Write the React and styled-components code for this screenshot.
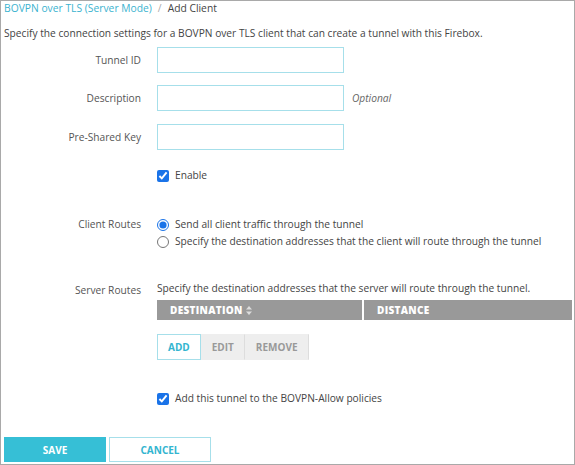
import React, { useState } from "react";
import styled, { createGlobalStyle } from "styled-components";

const GlobalStyle = createGlobalStyle`
  html, body {
    margin: 0;
    padding: 0;
    background: #fff;
  }
  body {
    font-family: "Open Sans", "Liberation Sans", sans-serif;
    font-size: 10.2px;
    color: #444;
  }
`;

const Page = styled.div`
  box-sizing: border-box;
  width: 575px;
  height: 465px;
  border: 1px solid #a9a9a9;
  padding: 0 3px;
  display: flex;
  flex-direction: column;
`;

const Crumbs = styled.div`
  height: 17px;
  line-height: 15px;
  display: flex;
  gap: 6px;
  font-size: 10.3px;
`;

const CrumbLink = styled.span`
  color: #3bb3cf;
`;

const CrumbSep = styled.span`
  color: #aaa;
`;

const Intro = styled.p`
  margin: 7px 0 0;
  line-height: 17px;
  color: #444;
`;

const Row = styled.div`
  display: grid;
  grid-template-columns: 137px 1fr;
  column-gap: 16px;
  align-items: ${(p) => p.$align || "center"};
  margin-top: ${(p) => p.$top || 0}px;
`;

const Label = styled.div`
  text-align: right;
  color: #555;
  line-height: 17px;
  margin-top: ${(p) => p.$top || 0}px;
`;

const Field = styled.div`
  display: flex;
  align-items: center;
  gap: 8px;
`;

const TextInput = styled.input`
  box-sizing: border-box;
  width: 187px;
  height: 26px;
  border: 1px solid #a6dfea;
  outline: none;
  padding: 0 6px;
  font: inherit;
`;

const Hint = styled.span`
  font-style: italic;
  color: #666;
`;

const Check = styled.label`
  display: flex;
  align-items: center;
  gap: 6px;
  line-height: 17px;
  color: #444;

  input {
    margin: 0;
    width: 12px;
    height: 12px;
    accent-color: #1a73e8;
  }
`;

const Options = styled.div`
  display: flex;
  flex-direction: column;
  margin-top: -1px;
`;

const Help = styled.div`
  line-height: 17px;
  color: #444;
  margin-top: 1px;
`;

const Table = styled.div`
  display: grid;
  grid-template-columns: 205px 1fr;
  gap: 2px;
  margin-top: 3px;
  width: 415px;
`;

const HeadCell = styled.div`
  background: #999;
  color: #fff;
  font-weight: 800;
  font-size: 10px;
  letter-spacing: 0.3px;
  height: 20px;
  padding: 0 13px;
  display: flex;
  align-items: center;
  gap: 3px;
`;

const Toolbar = styled.div`
  display: flex;
  margin-top: 14px;
`;

const ToolButton = styled.button`
  box-sizing: border-box;
  height: 26px;
  padding: 0 10px;
  font: inherit;
  font-weight: 700;
  font-size: 10px;
  border: 1px solid ${(p) => (p.$active ? "#a6dfea" : "#eee")};
  border-right: ${(p) => (p.$active ? "1px solid #a6dfea" : "1px solid #ddd")};
  background: ${(p) => (p.$active ? "#fff" : "#eee")};
  color: ${(p) => (p.$active ? "#33b5d0" : "#999")};
`;

const Footer = styled.div`
  display: flex;
  gap: 3px;
  margin-top: auto;
  margin-bottom: 2px;
`;

const MainButton = styled.button`
  box-sizing: border-box;
  width: 102px;
  height: 25px;
  font: inherit;
  font-weight: 700;
  font-size: 10px;
  border: 1px solid ${(p) => (p.$primary ? "#36bfd6" : "#a6dfea")};
  background: ${(p) => (p.$primary ? "#36bfd6" : "#fff")};
  color: ${(p) => (p.$primary ? "#fff" : "#33b5d0")};
`;

const SortIcon = () => (
  <svg width="6" height="9" viewBox="0 0 6 9">
    <path d="M3 0 L6 3.5 H0 Z" fill="#ddd" />
    <path d="M3 9 L6 5.5 H0 Z" fill="#ddd" />
  </svg>
);

const App = () => {
  const [enabled, setEnabled] = useState(true);
  const [allow, setAllow] = useState(true);
  const [route, setRoute] = useState("all");

  return (
    <>
      <GlobalStyle />
      <Page>
        <Crumbs>
          <CrumbLink>BOVPN over TLS (Server Mode)</CrumbLink>
          <CrumbSep>/</CrumbSep>
          <span>Add Client</span>
        </Crumbs>
        <Intro>
          Specify the connection settings for a BOVPN over TLS client that can
          create a tunnel with this Firebox.
        </Intro>

        <Row $top={5}>
          <Label>Tunnel ID</Label>
          <Field>
            <TextInput />
          </Field>
        </Row>
        <Row $top={12}>
          <Label>Description</Label>
          <Field>
            <TextInput />
            <Hint>Optional</Hint>
          </Field>
        </Row>
        <Row $top={13}>
          <Label>Pre-Shared Key</Label>
          <Field>
            <TextInput />
          </Field>
        </Row>
        <Row $top={17}>
          <span />
          <Check>
            <input
              type="checkbox"
              checked={enabled}
              onChange={(e) => setEnabled(e.target.checked)}
            />
            Enable
          </Check>
        </Row>

        <Row $top={33} $align="start">
          <Label $top={-1}>Client Routes</Label>
          <Options>
            <Check>
              <input
                type="radio"
                name="route"
                checked={route === "all"}
                onChange={() => setRoute("all")}
              />
              Send all client traffic through the tunnel
            </Check>
            <Check>
              <input
                type="radio"
                name="route"
                checked={route === "some"}
                onChange={() => setRoute("some")}
              />
              Specify the destination addresses that the client will route
              through the tunnel
            </Check>
          </Options>
        </Row>

        <Row $top={29} $align="start">
          <Label $top={3}>Server Routes</Label>
          <div>
            <Help>
              Specify the destination addresses that the server will route
              through the tunnel.
            </Help>
            <Table>
              <HeadCell>
                DESTINATION <SortIcon />
              </HeadCell>
              <HeadCell>DISTANCE</HeadCell>
            </Table>
            <Toolbar>
              <ToolButton $active>ADD</ToolButton>
              <ToolButton>EDIT</ToolButton>
              <ToolButton>REMOVE</ToolButton>
            </Toolbar>
          </div>
        </Row>

        <Row $top={30}>
          <span />
          <Check>
            <input
              type="checkbox"
              checked={allow}
              onChange={(e) => setAllow(e.target.checked)}
            />
            Add this tunnel to the BOVPN-Allow policies
          </Check>
        </Row>

        <Footer>
          <MainButton $primary>SAVE</MainButton>
          <MainButton>CANCEL</MainButton>
        </Footer>
      </Page>
    </>
  );
};

export default App;
